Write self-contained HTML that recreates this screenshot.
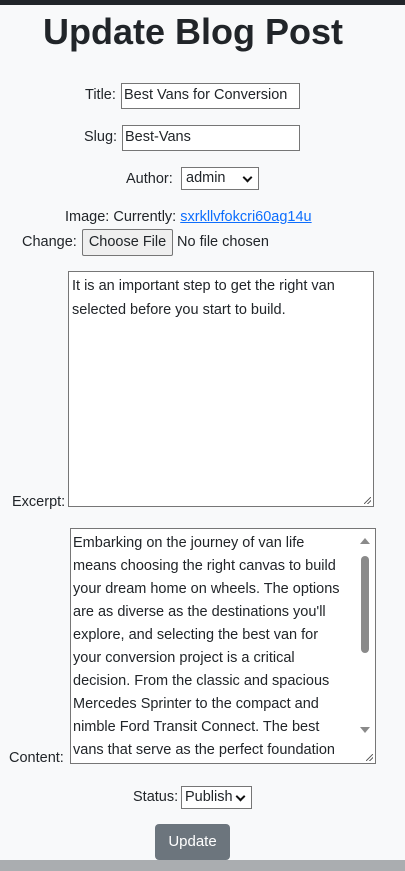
<!DOCTYPE html>
<html><head><meta charset="utf-8"><style>
*{box-sizing:border-box;margin:0;padding:0}
html,body{width:405px;height:871px;overflow:hidden;background:#f8f9fa;font-family:"Liberation Sans",sans-serif;color:#212529;font-size:14.5px}
.a{position:absolute;white-space:nowrap}
.box{position:absolute;background:#fff;border:1px solid #767676}
.t{line-height:24px;padding:0 3px;font-size:14.5px}
.sel::after{content:"";position:absolute;right:7px;top:6px;width:5px;height:5px;border-right:2px solid #111;border-bottom:2px solid #111;transform:rotate(45deg)}
.grip{position:absolute;width:7px;height:7px;background:linear-gradient(135deg,transparent 45%,#666 45%,#666 55%,transparent 55%,transparent 70%,#666 70%,#666 80%,transparent 80%)}
</style></head><body>
<div class="a" style="left:0;top:0;width:405px;height:5px;background:#212529"></div>
<div class="a" style="left:0;top:9px;width:386px;text-align:center;font-size:36px;font-weight:bold;line-height:46px">Update Blog Post</div>

<div class="a" style="left:85px;top:87px">Title:</div>
<div class="box" style="left:121px;top:83px;width:179px;height:26px;padding:3px 2px">Best Vans for Conversion</div>

<div class="a" style="left:84px;top:129px">Slug:</div>
<div class="box" style="left:122px;top:125px;width:178px;height:26px;padding:3px 2px">Best-Vans</div>

<div class="a" style="left:126px;top:171px">Author:</div>
<div class="box sel" style="left:181px;top:167px;width:78px;height:23px;padding:2px 4px">admin</div>

<div class="a" style="left:65px;top:209px">Image: Currently: <span style="color:#0d6efd;text-decoration:underline">sxrkllvfokcri60ag14u</span></div>
<div class="a" style="left:22px;top:234px">Change:</div>
<div class="a" style="left:82px;top:229px;width:91px;height:27px;background:#efefef;border:1px solid #767676;border-radius:2px;text-align:center;line-height:25px">Choose File</div>
<div class="a" style="left:177px;top:234px">No file chosen</div>

<div class="a" style="left:12px;top:494px">Excerpt:</div>
<div class="box t" style="left:68px;top:271px;width:306px;height:236px;padding-top:2px;white-space:normal">It is an important step to get the right van selected before you start to build.</div>
<div class="grip" style="left:364px;top:497px"></div>

<div class="a" style="left:9px;top:750px">Content:</div>
<div class="box t" style="left:70px;top:528px;width:306px;height:236px;padding:3px 17px 0 2px;white-space:nowrap;overflow:hidden;line-height:23px">Embarking on the journey of van life<br>means choosing the right canvas to build<br>your dream home on wheels. The options<br>are as diverse as the destinations you'll<br>explore, and selecting the best van for<br>your conversion project is a critical<br>decision. From the classic and spacious<br>Mercedes Sprinter to the compact and<br>nimble Ford Transit Connect. The best<br>vans that serve as the perfect foundation</div>
<div class="a" style="left:361px;top:556px;width:8px;height:97px;background:#8a8a8a;border-radius:4px"></div>
<div class="a" style="left:360px;top:538px;width:0;height:0;border-left:5px solid transparent;border-right:5px solid transparent;border-bottom:6px solid #8a8a8a"></div>
<div class="a" style="left:360px;top:727px;width:0;height:0;border-left:5px solid transparent;border-right:5px solid transparent;border-top:6px solid #8a8a8a"></div>
<div class="grip" style="left:366px;top:754px"></div>

<div class="a" style="left:133px;top:789px">Status:</div>
<div class="box sel" style="left:181px;top:786px;width:71px;height:23px;padding:2px 3px">Publish</div>

<div class="a" style="left:155px;top:824px;width:75px;height:36px;background:#6c757d;color:#fff;border-radius:4px;text-align:center;line-height:36px;font-size:15px">Update</div>
<div class="a" style="left:0;top:860px;width:405px;height:11px;background:#aaadb0"></div>
</body></html>
